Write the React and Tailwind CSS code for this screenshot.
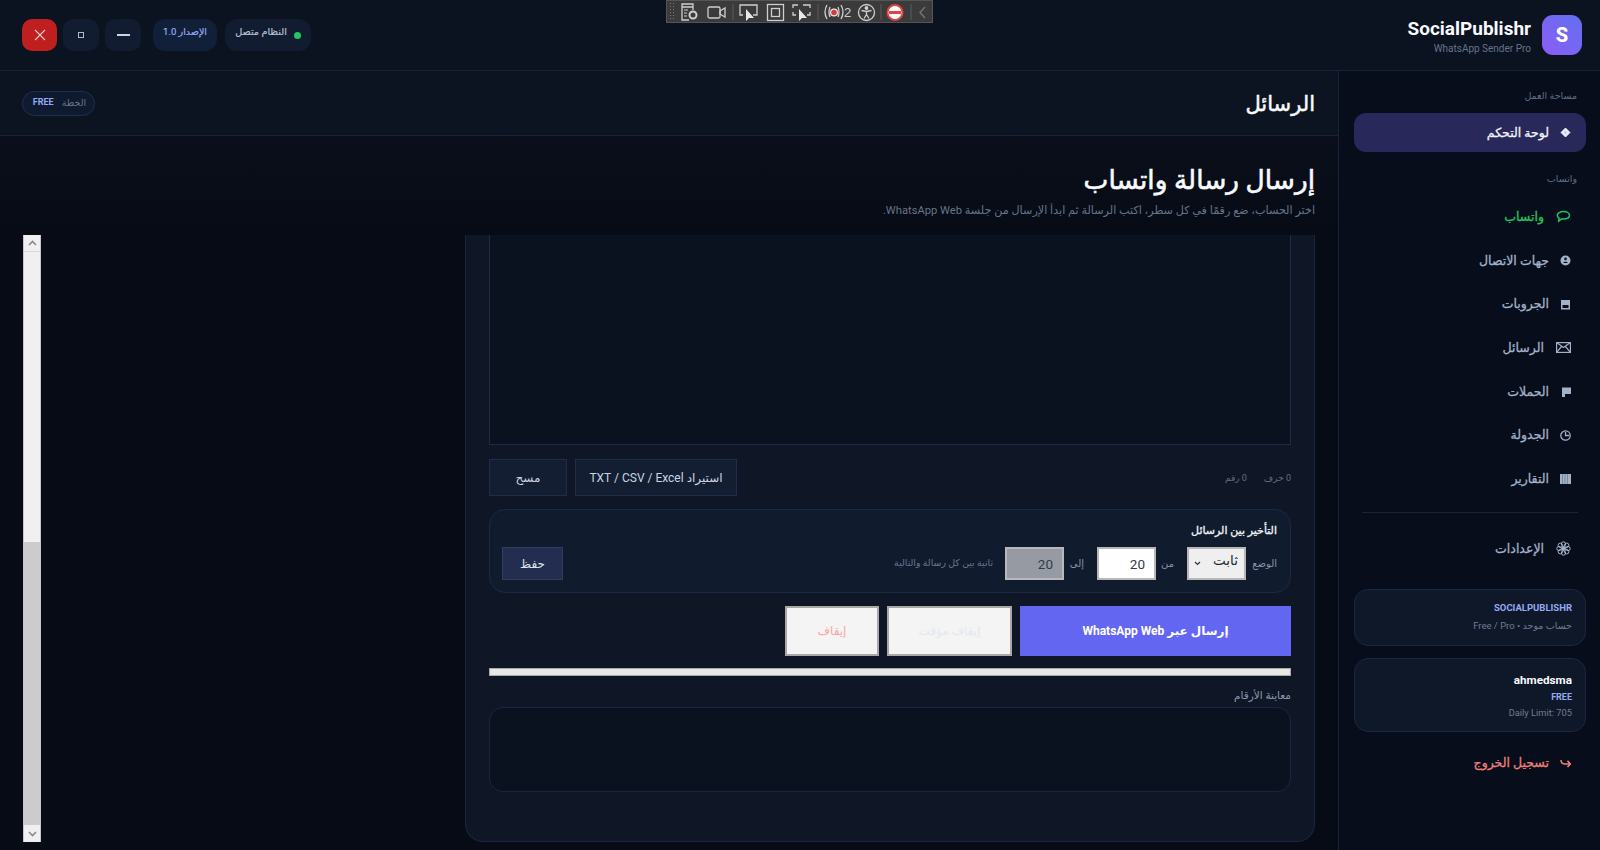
import React from 'react';

const font = 'font-["Roboto","DejaVu_Sans",sans-serif]';

function ToolbarIcons() {
  return (
    <div dir="ltr" className="absolute left-[666px] top-0 z-10 h-[23px] w-[267px] border border-[#555] bg-[#3b3b3b]">
      <div className="absolute left-[2px] top-[1px] h-[19px] w-[6px] bg-[radial-gradient(#777_1px,transparent_1px)] bg-[length:3px_3px]" />
      <svg className="absolute left-0 top-0" width="265" height="21" viewBox="0 0 265 21" fill="none" stroke="#cfcfcf" strokeWidth="1.300">
        {/* page settings */}
        <path d="M15 3h11v3H15zM15 6v13h7M26 6v3" />
        <path d="M17 9h4M17 12h3M17 15h3" strokeWidth="1" />
        <circle cx="26" cy="14" r="3.500" strokeWidth="2" />
        {/* camera */}
        <rect x="41" y="6" width="12" height="11" rx="1.500" />
        <path d="M53 10l5-3v9l-5-3z" />
        <path d="M66 3v16" stroke="#555" />
        {/* select element */}
        <path d="M76 14h-3V4h17v10h-4" />
        <path d="M79 8v12l3-3h5z" fill="#e8e8e8" stroke="none" />
        {/* frame */}
        <rect x="100.500" y="3.500" width="16" height="16" />
        <rect x="104.500" y="7.500" width="8" height="8" />
        {/* region */}
        <path d="M126 7V4h5M136 4h4M138 4h5v3M143 11v3h-3M126 11v3h3" />
        <path d="M132 8v12l3-3h5z" fill="#e8e8e8" stroke="none" />
        <path d="M151 3v16" stroke="#555" />
        {/* errors */}
        <path d="M160 4q-4 7 0 14M174 4q4 7 0 14M163 6q-2 5 0 10M171 6q2 5 0 10" />
        <circle cx="167" cy="11.500" r="4" fill="#e8e8e8" stroke="none" />
        <circle cx="167" cy="11.500" r="2.800" fill="#d93a3a" stroke="none" />
        <text x="177" y="16" fill="#cfcfcf" stroke="none" fontSize="13" fontFamily="Liberation Sans">2</text>
        {/* accessibility */}
        <circle cx="199.500" cy="11.500" r="8" />
        <circle cx="199.500" cy="7" r="1.300" fill="#cfcfcf" />
        <path d="M194.500 9.500l5 1 5-1M199.500 10.500v3l-2.500 4M199.500 13.500l2.500 4" />
        <path d="M214 3v16" stroke="#555" />
        {/* blocked */}
        <circle cx="228" cy="11.500" r="7.500" fill="#fff" stroke="#e04444" strokeWidth="2" />
        <rect x="222" y="10" width="12" height="3" fill="#e04444" stroke="none" />
        <path d="M244 3v16" stroke="#555" />
        <path d="M258 6l-5 5.500 5 5.500" stroke="#777" />
      </svg>
    </div>
  );
}

function NavIcon({ name }) {
  const c = 'shrink-0';
  if (name === 'dash') return <svg className={c} width="11" height="11" viewBox="0 0 11 11"><path d="M5.500 1l4.500 4.500-4.500 4.500L1 5.500z" fill="#e8ecf4" stroke="#fff" strokeWidth=".8" /><path d="M5.500 4l1.500 1.500L5.500 7 4 5.500z" fill="#b9c2ea" /></svg>;
  if (name === 'chat') return <svg className={c} width="15" height="13" viewBox="0 0 15 13" fill="none" stroke="currentColor" strokeWidth="1.500"><path d="M7.500 1.500c3.300 0 6 1.500 6 3.800S10.800 9 7.500 9c-.8 0-1.300 0-2-.2L2.800 11l.3-2.800C1.800 7.400 1.300 6.400 1.300 5.300c0-2.300 2.900-3.800 6.200-3.800z" /></svg>;
  if (name === 'contacts') return <svg className={c} width="11" height="11" viewBox="0 0 11 11"><circle cx="5.500" cy="5.500" r="5" fill="currentColor" /><circle cx="5.500" cy="3.900" r="1.300" fill="#070d1a" /><path d="M3.300 8c0-1.700 4.400-1.700 4.400 0z" fill="#070d1a" /></svg>;
  if (name === 'groups') return <svg className={c} width="11" height="11" viewBox="0 0 11 11"><path d="M1 1h9v9.500H1zM2.500 6v3h6V6z" fill="currentColor" fillRule="evenodd" /></svg>;
  if (name === 'mail') return <svg className={c} width="15" height="11" viewBox="0 0 15 11" fill="none" stroke="currentColor" strokeWidth="1.200"><rect x=".6" y=".6" width="13.800" height="9.800" /><path d="M.6.6L7.500 5.500 14.400.6M.6 10.400L5.500 4.500M14.400 10.400L9.500 4.500" /></svg>;
  if (name === 'flag') return <svg className={c} width="9" height="10" viewBox="0 0 9 10"><path d="M0 .5h9v6.500H3V10H0z" fill="currentColor" /></svg>;
  if (name === 'clock') return <svg className={c} width="11" height="11" viewBox="0 0 11 11" fill="none" stroke="currentColor" strokeWidth="1.300"><circle cx="5.500" cy="5.500" r="4.700" /><path d="M5.500 2v3.500H9" /></svg>;
  if (name === 'report') return <svg className={c} width="11" height="10" viewBox="0 0 11 10"><rect width="11" height="10" fill="currentColor" /><path d="M2.500 0v10M5 0v10M7.500 0v10" stroke="#070d1a" strokeWidth=".5" opacity=".5" /></svg>;
  if (name === 'gear') return <svg className={c} width="15" height="15" viewBox="0 0 15 15" fill="none" stroke="currentColor"><circle cx="7.500" cy="7.500" r="1.800" fill="currentColor" /><circle cx="7.500" cy="3" r="2.200" /><circle cx="7.500" cy="12" r="2.200" /><circle cx="3" cy="7.500" r="2.200" /><circle cx="12" cy="7.500" r="2.200" /><circle cx="4.300" cy="4.300" r="2.200" /><circle cx="10.700" cy="4.300" r="2.200" /><circle cx="4.300" cy="10.700" r="2.200" /><circle cx="10.700" cy="10.700" r="2.200" /></svg>;
  return <svg className={c} width="11" height="10" viewBox="0 0 11 10" fill="none" stroke="currentColor" strokeWidth="1.600"><path d="M1 2c0 3 1.500 4 4 4h5M7.500 2.800L10.300 6 7.500 9" /></svg>;
}

const navItems = [
  ['contacts', 'جهات الاتصال', 'gap-[11px]'],
  ['groups', 'الجروبات', 'gap-[11px]'],
  ['mail', 'الرسائل', 'gap-[12px]'],
  ['flag', 'الحملات', 'gap-[13px]'],
  ['clock', 'الجدولة', 'gap-[11px]'],
  ['report', 'التقارير', 'gap-[11px]'],
];

function NavRow({ icon, label, gap = 'gap-[11px]', color = 'text-[#a3b1c9]' }) {
  return (
    <div className={`flex h-[43.700px] items-center pr-[13px] text-[12.500px] [-webkit-text-stroke:0.3px] ${gap} ${color}`}>
      <NavIcon name={icon} />
      <span className="pt-[1px]">{label}</span>
    </div>
  );
}

function Sidebar() {
  return (
    <aside className="flex h-full w-[262px] shrink-0 flex-col border-l border-[#182238] bg-[#070d1a] pr-[14px] pl-[15px]">
      <p className="mt-[17px] h-[16px] pr-[9px] text-[9.500px] leading-[16px] text-[#5f6d85]">مساحة العمل</p>
      <div className="mt-[9px] flex h-[39px] items-center gap-[11px] rounded-[12px] bg-[#29285a] pr-[15px] text-[12.500px] text-[#f1f5f9] [-webkit-text-stroke:0.3px]">
        <NavIcon name="dash" />
        <span className="pt-[1px]">لوحة التحكم</span>
      </div>
      <p className="mt-[19px] h-[16px] pr-[9px] text-[9.500px] leading-[16px] text-[#5f6d85]">واتساب</p>
      <div className="mt-[8px] pr-[2px]">
        <NavRow icon="chat" label="واتساب" gap="gap-[12px]" color="text-[#22c55e]" />
        {navItems.map(([icon, label, gap]) => (
          <NavRow key={label} icon={icon} label={label} gap={gap} />
        ))}
      </div>
      <div className="mx-[8px] mt-[11px] h-px bg-[#1a2438]" />
      <div className="mt-[14px] pr-[2px]">
        <NavRow icon="gear" label="الإعدادات" gap="gap-[12px]" />
      </div>
      <div className="mt-[18px] flex h-[57px] flex-col justify-center gap-[2px] rounded-[14px] border border-[#1b2740] bg-[#0f1829] pr-[13px] pl-[13px]">
        <p className="text-[9.500px] font-bold leading-[16px] text-[#93a9f5]">SOCIALPUBLISHR</p>
        <p className="text-[9.500px] leading-[16px] text-[#6f7c92]">حساب موحد • Free / Pro</p>
      </div>
      <div className="mt-[12px] flex h-[74px] flex-col justify-center rounded-[14px] border border-[#1b2740] bg-[#0f1829] pr-[13px] pl-[13px]">
        <p className="text-[11.700px] font-bold leading-[20px] text-[#f8fafc]">ahmedsma</p>
        <p className="text-[9px] font-bold leading-[15px] text-[#93a9f5]">FREE</p>
        <p className="text-[9.300px] leading-[15px] text-[#6f7c92]">Daily Limit: 705</p>
      </div>
      <div className="mt-[10px] pr-[2px]">
        <NavRow icon="logout" label="تسجيل الخروج" gap="gap-[11px]" color="text-[#ee7f78]" />
      </div>
    </aside>
  );
}

function TopBar() {
  return (
    <header className="flex h-[71px] shrink-0 items-center justify-between border-b border-[#182238] bg-[#0b1220] pr-[18px] pl-[22px]">
      <div className="flex items-center gap-[11px]">
        <div className="flex h-[40px] w-[40px] items-center justify-center rounded-[11px] bg-gradient-to-bl from-[#5f6ff0] to-[#8b5cf6] text-[20px] font-extrabold text-white">S</div>
        <div className="pt-[5px]">
          <p dir="ltr" className="text-right text-[19px] font-bold leading-[22px] text-[#f8fafc]">SocialPublishr</p>
          <p dir="ltr" className="text-right text-[10px] leading-[18px] text-[#64748b]">WhatsApp Sender Pro</p>
        </div>
      </div>
      <div className="flex items-center">
        <div className="flex h-[32px] w-[86px] items-center justify-center gap-[7px] rounded-[12px] bg-[#121c30] pb-[5px]">
          <span className="mt-[5px] h-[7px] w-[7px] rounded-full bg-[#22c55e]" />
          <span className="text-[9.700px] text-[#b4c0d4] [-webkit-text-stroke:0.2px]">النظام متصل</span>
        </div>
        <div className="mr-[8px] flex h-[32px] w-[64px] items-center justify-center rounded-[12px] bg-[#121f38] pb-[5px] text-[9.500px] text-[#93a9f5] [-webkit-text-stroke:0.2px]">الإصدار 1.0</div>
        <div className="mr-[12px] flex h-[32px] w-[36px] items-center justify-center rounded-[10px] bg-[#121c30]">
          <span className="h-[2px] w-[13px] bg-[#cbd5e1]" />
        </div>
        <div className="mr-[6px] flex h-[32px] w-[36px] items-center justify-center rounded-[10px] bg-[#121c30]">
          <span className="h-[6px] w-[6px] border border-[#aeb9ca]" />
        </div>
        <div className="mr-[6px] flex h-[32px] w-[35px] items-center justify-center rounded-[10px] bg-[#c01f1f]">
          <svg width="12" height="12" viewBox="0 0 12 12" stroke="#f0c8c8" strokeWidth="1.200"><path d="M1 1l10 10M11 1L1 11" /></svg>
        </div>
      </div>
    </header>
  );
}

function FakeScrollbar() {
  return (
    <div className="flex h-full w-[18px] shrink-0 flex-col border-x border-[#c8c8c8] bg-[#f0f0f0]">
      <div className="flex h-[17px] shrink-0 items-center justify-center border-b border-[#d8d8d8]">
        <svg width="9" height="6" viewBox="0 0 9 6" fill="none" stroke="#8a8a8a" strokeWidth="1.600"><path d="M1 5l3.500-3.500L8 5" /></svg>
      </div>
      <div className="h-[290px] shrink-0" />
      <div className="flex-1 bg-[#cccccc]" />
      <div className="flex h-[17px] shrink-0 items-center justify-center">
        <svg width="9" height="6" viewBox="0 0 9 6" fill="none" stroke="#8a8a8a" strokeWidth="1.600"><path d="M1 1l3.500 3.500L8 1" /></svg>
      </div>
    </div>
  );
}

function DelayPanel() {
  const field = 'h-[33px] w-[59px] border-2 border-[#b8b8b8] pr-[9px] text-[13.500px] outline-none';
  return (
    <section className="mt-[13px] h-[84px] rounded-[16px] border border-[#1b2a45] bg-[#111b2e] pr-[13px] pl-[12px]">
      <p className="mt-[11px] h-[20px] text-[11px] leading-[20px] text-[#f1f5f9] [-webkit-text-stroke:0.3px]">التأخير بين الرسائل</p>
      <div className="mt-[6px] flex items-center">
        <span className="w-[25px] text-[10px] text-[#8592a8]">الوضع</span>
        <div className="relative mr-[6px]">
          <select className={`${field} appearance-none bg-[#efefef] !pr-[6px] pb-[6px] text-[#1f2937]`} defaultValue="fixed">
            <option value="fixed">ثابت</option>
          </select>
          <svg className="absolute left-[7px] top-[14px]" width="7" height="5" viewBox="0 0 7 5" fill="none" stroke="#333" strokeWidth="1.200"><path d="M1 1l2.500 2.500L6 1" /></svg>
        </div>
        <span className="mr-[13px] w-[12px] whitespace-nowrap text-[10px] text-[#8592a8]">من</span>
        <input readOnly value="20" className={`${field} mr-[6px] bg-white text-[#333a46]`} />
        <span className="mr-[13px] w-[14px] whitespace-nowrap text-[10px] text-[#8592a8]">إلى</span>
        <input readOnly disabled value="20" className={`${field} mr-[6px] border-[#808590] bg-[#969aa3] text-[#333a46]`} />
        <span className="mr-[12px] text-[9.400px] text-[#6b788e]">ثانية بين كل رسالة والتالية</span>
        <button className="mr-auto h-[33px] w-[61px] border border-[#2f3d63] bg-[#232d4f] text-[12px] text-[#dbe3f0]">حفظ</button>
      </div>
    </section>
  );
}

export default function App() {
  const disabledBtn = 'h-[50px] border-2 border-[#a8a8a8] bg-[#f4f4f4] text-[12px]';
  return (
    <div dir="rtl" className={`relative flex h-[850px] w-[1600px] flex-col overflow-hidden bg-[#070b15] ${font}`}>
      <ToolbarIcons />
      <TopBar />
      <div className="flex min-h-0 flex-1">
        <Sidebar />
        <main className="flex min-w-0 flex-1 flex-col">
          <div className="flex h-[65px] shrink-0 items-center justify-between border-b border-[#182238] bg-[#0d1421] pr-[23px] pl-[22px]">
            <h2 className="pt-[3px] text-[21px] text-[#f8fafc] [-webkit-text-stroke:0.5px]">الرسائل</h2>
            <div className="flex h-[25px] w-[73px] items-center justify-center gap-[8px] rounded-full border border-[#1e2f50] bg-[#0f1a2e] pl-[2px] text-[9.500px]">
              <span className="text-[#64748b]">الخطة</span>
              <span className="text-[9px] font-bold text-[#93a9f5]">FREE</span>
            </div>
          </div>
          <div className="h-[99px] shrink-0 bg-gradient-to-b from-[#0a0f1b] to-[#070b15] pr-[23px] pt-[21px]">
            <h1 className="text-[26.400px] leading-[46px] text-[#f8fafc] [-webkit-text-stroke:0.6px]">إرسال رسالة واتساب</h1>
            <p className="text-[11.200px] leading-[16px] text-[#64748b]">اختر الحساب، ضع رقمًا في كل سطر، اكتب الرسالة ثم ابدأ الإرسال من جلسة WhatsApp Web.</p>
          </div>
          <div className="flex min-h-0 flex-1 justify-between pr-[23px] pl-[23px] pb-[8px]">
            <div className="flex h-full w-[850px] flex-col rounded-b-[18px] border-x border-b border-[#1a2640] bg-[#0f1626] px-[23px]">
              <textarea readOnly className="h-[210px] w-full resize-none border-x border-b border-[#1e2b47] bg-[#0a111f] outline-none" />
              <div className="mt-[14px] flex h-[37px] items-center justify-between">
                <div className="flex gap-[17px] pt-[3px] text-[9px] text-[#5f6d85]">
                  <span>0 حرف</span>
                  <span>0 رقم</span>
                </div>
                <div className="flex gap-[8px]">
                  <button className="h-[37px] w-[162px] border border-[#1f2d4a] bg-[#131e33] text-[12px] text-[#cbd5e1]">استيراد TXT / CSV / Excel</button>
                  <button className="h-[37px] w-[78px] border border-[#1f2d4a] bg-[#131e33] text-[12px] text-[#cbd5e1]">مسح</button>
                </div>
              </div>
              <DelayPanel />
              <div className="mt-[13px] flex gap-[8px]">
                <button className="h-[50px] w-[271px] bg-[#6366f1] text-[12px] font-bold text-white">إرسال عبر WhatsApp Web</button>
                <button disabled className={`${disabledBtn} w-[125px] text-[#e2e8f0]`}>إيقاف مؤقت</button>
                <button disabled className={`${disabledBtn} w-[94px] text-[#fca5a5]`}>إيقاف</button>
              </div>
              <div className="mt-[12px] h-[8px] border border-[#a8a8a8] bg-[#e8e8e8]" />
              <p className="mt-[9px] h-[22px] text-[10.500px] leading-[22px] text-[#8a99b0]">معاينة الأرقام</p>
              <div className="h-[85px] rounded-[14px] border border-[#1a2640] bg-[#0a111f]" />
            </div>
            <FakeScrollbar />
          </div>
        </main>
      </div>
    </div>
  );
}
